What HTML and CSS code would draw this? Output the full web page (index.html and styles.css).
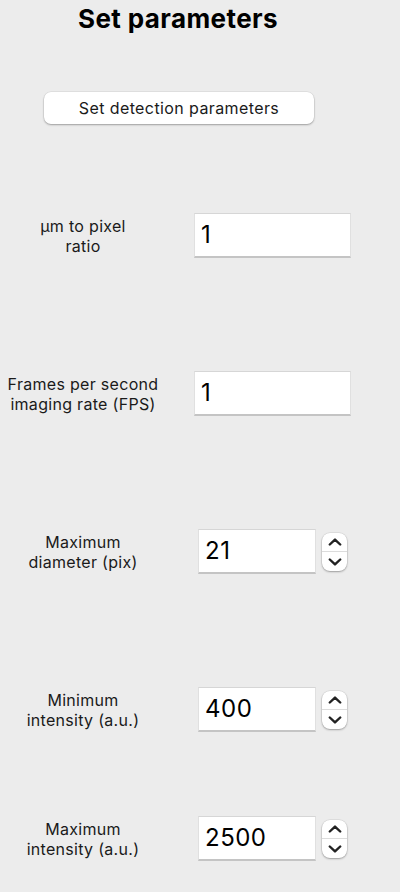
FILE: index.html
```html
<!DOCTYPE html>
<html>
<head>
<meta charset="utf-8">
<link rel="stylesheet" href="styles.css">
</head>
<body>
<div class="panel">
  <h1 class="title">Set parameters</h1>
  <button class="btn">Set detection parameters</button>
  <div class="rows">
    <div class="row">
      <div class="label">µm to pixel<br>ratio</div>
      <div class="field field-wide">1</div>
    </div>
    <div class="row">
      <div class="label">Frames per second<br>imaging rate (FPS)</div>
      <div class="field field-wide">1</div>
    </div>
    <div class="row">
      <div class="label">Maximum<br>diameter (pix)</div>
      <div class="field field-spin">21</div>
      <div class="spinner">
        <svg class="chev" width="14" height="8" viewBox="0 0 14 8"><path d="M1.8 6.5 L7 1.6 L12.2 6.5" fill="none" stroke="#222" stroke-width="2.4" stroke-linecap="round" stroke-linejoin="round"/></svg>
        <div class="divider"></div>
        <svg class="chev" width="14" height="8" viewBox="0 0 14 8"><path d="M1.8 1.5 L7 6.4 L12.2 1.5" fill="none" stroke="#222" stroke-width="2.4" stroke-linecap="round" stroke-linejoin="round"/></svg>
      </div>
    </div>
    <div class="row">
      <div class="label">Minimum<br>intensity (a.u.)</div>
      <div class="field field-spin">400</div>
      <div class="spinner">
        <svg class="chev" width="14" height="8" viewBox="0 0 14 8"><path d="M1.8 6.5 L7 1.6 L12.2 6.5" fill="none" stroke="#222" stroke-width="2.4" stroke-linecap="round" stroke-linejoin="round"/></svg>
        <div class="divider"></div>
        <svg class="chev" width="14" height="8" viewBox="0 0 14 8"><path d="M1.8 1.5 L7 6.4 L12.2 1.5" fill="none" stroke="#222" stroke-width="2.4" stroke-linecap="round" stroke-linejoin="round"/></svg>
      </div>
    </div>
    <div class="row row-last">
      <div class="label">Maximum<br>intensity (a.u.)</div>
      <div class="field field-spin">2500</div>
      <div class="spinner">
        <svg class="chev" width="14" height="8" viewBox="0 0 14 8"><path d="M1.8 6.5 L7 1.6 L12.2 6.5" fill="none" stroke="#222" stroke-width="2.4" stroke-linecap="round" stroke-linejoin="round"/></svg>
        <div class="divider"></div>
        <svg class="chev" width="14" height="8" viewBox="0 0 14 8"><path d="M1.8 1.5 L7 6.4 L12.2 1.5" fill="none" stroke="#222" stroke-width="2.4" stroke-linecap="round" stroke-linejoin="round"/></svg>
      </div>
    </div>
  </div>
</div>
</body>
</html>
```

FILE: styles.css
```css
html, body {
  margin: 0;
  padding: 0;
  background: #ececec;
  height: 892px;
  overflow: hidden;
}
body {
  font-family: Inter, "Liberation Sans", sans-serif;
  color: #1a1a1a;
}
.panel {
  width: 356px;
  display: flex;
  flex-direction: column;
}
.title {
  margin: 4px 0 0 0;
  font-size: 26px;
  line-height: 30px;
  font-weight: 700;
  letter-spacing: 0.4px;
  text-align: center;
  color: #000;
}
.btn {
  margin: 58px 0 0 44px;
  width: 270px;
  height: 32px;
  border: none;
  border-radius: 7px;
  background: #fff;
  box-shadow: 0 1px 2px rgba(0,0,0,0.3), 0 0 0 0.5px rgba(0,0,0,0.08);
  font-family: Inter, "Liberation Sans", sans-serif;
  font-size: 16px;
  letter-spacing: 0.4px;
  color: #1a1a1a;
  padding: 0;
}
.rows {
  display: flex;
  flex-direction: column;
  gap: 113px;
  margin-top: 89px;
}
.row {
  display: flex;
  align-items: center;
  height: 45px;
}
.row-last {
  margin-top: -29px;
}
.label {
  width: 166px;
  text-align: center;
  font-size: 16px;
  line-height: 20px;
  letter-spacing: 0.3px;
  color: #1a1a1a;
  padding-top: 1px;
}
.field {
  height: 45px;
  box-sizing: border-box;
  background: #fff;
  border-top: 1px solid #d6d6d6;
  border-left: 1px solid #e0e0e0;
  border-right: 1px solid #e0e0e0;
  border-bottom: 2px solid #c4c4c4;
  font-size: 24px;
  line-height: 42px;
  letter-spacing: 0.5px;
  padding-left: 6px;
  color: #000;
}
.field-wide {
  margin-left: 28px;
  width: 157px;
}
.field-spin {
  margin-left: 32px;
  width: 118px;
}
.spinner {
  margin-left: 6px;
  width: 25px;
  height: 38px;
  box-sizing: border-box;
  background: #fff;
  border-radius: 8px;
  box-shadow: 0 1px 2px rgba(0,0,0,0.3), 0 0 0 0.5px rgba(0,0,0,0.1);
  display: flex;
  flex-direction: column;
  align-items: center;
  justify-content: space-between;
  padding: 5px 0 5px 0;
}
.divider {
  width: 100%;
  height: 1px;
  background: #dcdcdc;
}
.chev {
  display: block;
}
```
